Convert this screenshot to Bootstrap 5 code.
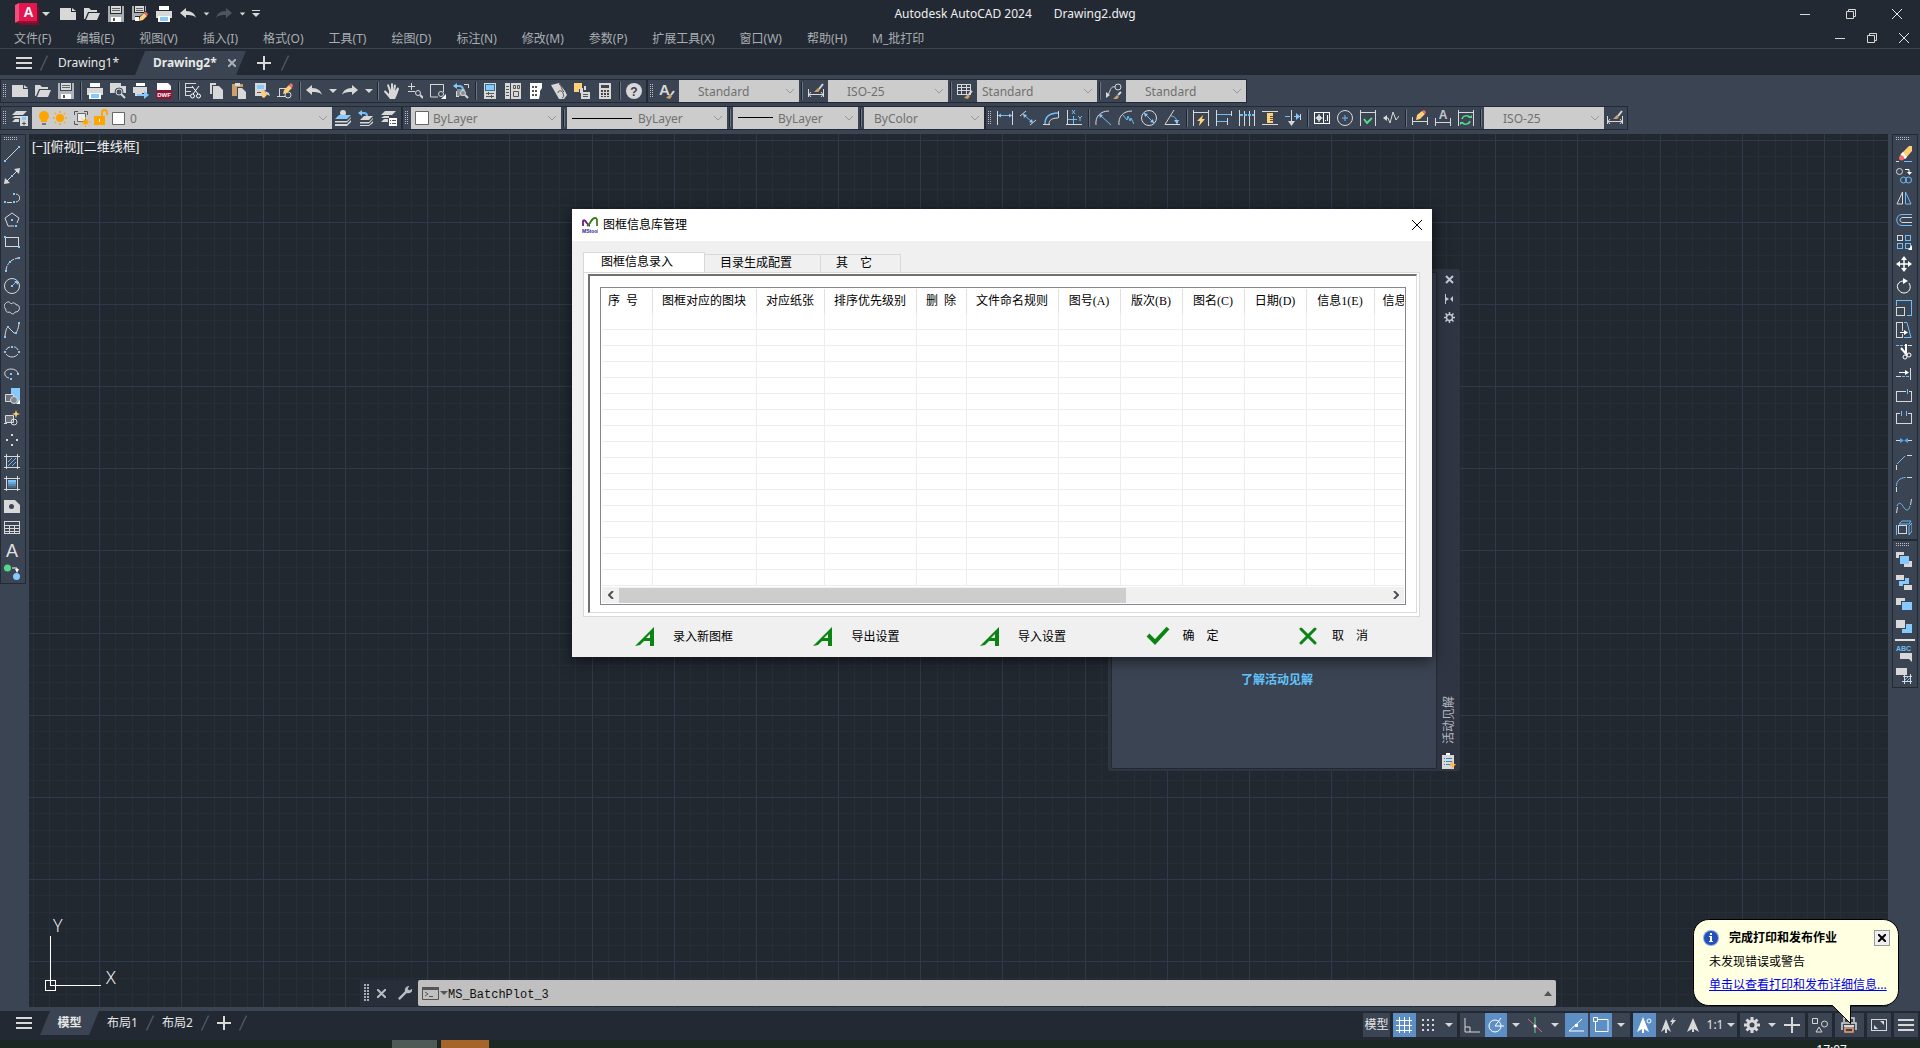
<!DOCTYPE html>
<html lang="zh-CN">
<head>
<meta charset="utf-8">
<meta name="viewport" content="width=device-width, initial-scale=1">
<title>Autodesk AutoCAD 2024 - Drawing2.dwg</title>
<link href="https://cdn.jsdelivr.net/npm/bootstrap@5.3.0/dist/css/bootstrap.min.css" rel="stylesheet">
<style>
:root{--dark:#222933;--bar:#3b4453;--line:#232a36;--lt:#d8d8d8;--bl:#6fbdf8;--ye:#ffcf76}
body{font:12px/16px "Noto Sans","Noto Sans CJK SC",sans-serif;background:var(--bar);color:#e6e6e6;overflow:hidden}
button,select,input{font:inherit}
svg{display:block;flex:none}
.ic{width:16px;height:16px}
/* icon paint */
.sl{stroke:var(--lt);fill:none}.sb{stroke:var(--bl);fill:none}.sw{stroke:#fff;fill:none}
.sd{stroke:var(--bar);fill:none}.sg{stroke:#56d88a;fill:none}.sy{stroke:#ffa500;fill:none}.sk{stroke:#555;fill:none}.sr{stroke:#e8637a;fill:none}
.fl{fill:var(--lt)}.fb{fill:#86c9ff}.fy{fill:var(--ye)}.fw{fill:#fff}.fd{fill:var(--bar)}.fo{fill:#ffa500}.fr{fill:#ff6a6a}.fg{fill:#56d88a}.fk{fill:#555}.fc{fill:#cba06a}
.crisp{shape-rendering:crispEdges}
.btn{--bs-btn-border-radius:0;--bs-btn-padding-x:0;--bs-btn-padding-y:0;--bs-btn-border-width:0;--bs-btn-font-size:12px;--bs-btn-color:#e6e6e6;--bs-btn-hover-color:#fff;--bs-btn-line-height:16px;display:flex;align-items:center;justify-content:center;flex:none}
.title-row,.menu-row,.file-tabs,.status-row{background:var(--dark)}
.title-row{height:28px;padding-left:15px}
.qa{width:24px;height:24px}
.caption{gap:22px;color:#eee;padding-left:110px}
.winbtn{width:46px;height:28px}
.menu-row{padding-left:14px;border-bottom:1px solid #39424f;height:21px}
.menu-row .nav{gap:25px}
.menu-row .nav-link{padding:2px 0 0;color:#a9adb2;line-height:18px}
.mdibtn{width:32px;height:20px}
.file-tabs{height:26px;padding:2px 0 0 16px}
.file-tabs .nav-link{padding:0;margin-left:2px;line-height:24px;color:#e8e8e8}
.newtab{margin:0 10px 0 11px}
.slash{width:8px;height:16px}
.hot{background:var(--bar);clip-path:polygon(10px 0,100% 0,calc(100% - 10px) 100%,0 100%)}
.hot-file{width:111px;height:24px;padding:0 10px 0 16px}
.toolbars{padding:4px 0;gap:3px}
.tbox{border:1px solid var(--line);height:24px;display:flex;align-items:center}
.grip{width:8px;height:14px;flex:none;background:repeating-linear-gradient(#b9bec6 0 1px,transparent 1px 2px) 2px 0/1px 14px no-repeat,repeating-linear-gradient(#b9bec6 0 1px,transparent 1px 2px) 4px 0/1px 14px no-repeat}
.tb{width:23px;height:22px;padding-right:1px}
.ar{width:13px;height:22px}
.sep{width:6px;height:18px;flex:none;display:flex}
.sep::before{content:"";width:2px;margin:0 auto;background:linear-gradient(90deg,#1f2631 50%,#6b7482 50%)}
.combo{position:relative;flex:none;height:22px}
.combo svg{position:absolute;left:0;top:0;pointer-events:none}
.combo .form-select,.combo .form-select:disabled{height:22px;padding:1px 20px 0 var(--in,19px);border:0;border-radius:0;font-size:12px;line-height:20px;color:#707070;background:#ccc url("data:image/svg+xml,%3Csvg xmlns='http://www.w3.org/2000/svg' width='10' height='6'%3E%3Cpath d='M1 1l4 4 4-4' fill='none' stroke='%23989898'/%3E%3C/svg%3E") no-repeat right 4px center/10px 6px;opacity:1}
.w120{width:120px}.w125{width:125px}.w150{width:150px}.w160{width:160px}.w300{width:300px}
.in5{--in:5px}.in10{--in:10px}.in22{--in:22px}.in45{--in:45px}.in71{--in:71px}.in98{--in:98px}
.side-left{width:29px}.side-right{width:32px;padding-left:4px}
.palette{width:26px;border:1px solid var(--line);padding-top:2px}
.hgrip{width:14px;height:3px;margin:0 auto 3px 3px;background:repeating-linear-gradient(90deg,#b9bec6 0 1px,transparent 1px 2px) 0 0/14px 1px no-repeat,repeating-linear-gradient(90deg,#b9bec6 0 1px,transparent 1px 2px) 0 2px/14px 1px no-repeat}
.pb{width:22px;height:22px}
.hrule{height:2px;background:#e2e2e2;margin:2px}
.drawing{background:#212830;overflow:hidden}
.gridlines{position:absolute;inset:0;width:100%;height:100%}
.viewlabel{position:relative;padding:3px 3px;font:13px/20px "Liberation Sans","Noto Sans CJK SC",sans-serif;color:#f2f2f2}
.viewlabel a{color:inherit;text-decoration:none}
.ucs{position:absolute;left:12px;bottom:10px}
.ucs text{font:300 18px "Open Sans",sans-serif;fill:#fff}
/* dialog */
.dlg{position:absolute;left:543px;top:75px;width:860px;background:#f0f0f0;color:#000;box-shadow:0 3px 14px rgba(0,0,0,.6);font-family:"Liberation Serif","Noto Sans CJK SC",sans-serif}
.dlg-head{height:32px;background:#fff;padding:0 10px 0 10px;gap:5px}
.dlg-body{padding:11px 12px 0 11px}
.dlg .nav-tabs{border:0;align-items:flex-end}
.dlg .nav-tabs .nav-link{border:1px solid #d9d9d9;border-bottom:0;border-left:0;border-radius:0;margin:0;padding:0 0 0 15px;height:18px;line-height:17px;color:#000;text-align:left;background:#f0f0f0}
.dlg .nav-tabs .nav-link.active{height:20px;background:#fff;border-left:1px solid #d9d9d9;padding:0 0 0 17px;line-height:19px}
.t1{width:122px}.t2{width:116px}.t3{width:80px}
.page{background:#fff;border:1px solid #d9d9d9;padding:1px 2px 3px 4px}
.sunk{border-top:2px solid #707070;border-left:2px solid #707070;border-right:1px solid #dcdcdc;border-bottom:1px solid #dcdcdc;padding:11px 10px 7px 10px}
.list{border:1px solid #828790;padding:1px}
.list-clip{overflow:hidden;height:298px}
.list-clip .table{table-layout:fixed;width:833px;margin:0;--bs-table-bg:#fff;--bs-table-color:#000}
.list-clip th{height:24px;padding:0;text-align:center;font-weight:400;border:0;border-right:1px solid #e0e0e0;white-space:nowrap;line-height:24px}
.list-clip th:first-child{text-align:left;padding-left:6px}
.list-clip td{height:16px;padding:0;border:0;border-right:1px solid #ededed;border-bottom:1px solid #ededed}
.sbar{height:16px;background:#f0f0f0}
.sbar .btn{width:17px;height:16px}
.sbar .track{padding-top:1px}
.sbar .thumb{width:66%;height:15px;background:#cdcdcd}
.acts{height:40px;padding:0 64px 0 63px}
.acts .btn{--bs-btn-color:#000;--bs-btn-hover-color:#000;gap:18px}
.acts .near{gap:12px;padding-bottom:3px}
.acts .near2{gap:15px;padding-bottom:3px}
/* activity palette */
.act{position:absolute;left:1079px;top:135px;width:352px;height:502px;background:#2f3542;border-radius:3px}
.act-main{background:var(--bar);border:1px solid #232932;margin:3px 0 2px 3px;border-radius:2px;padding:0 0 80px 6px}
.act-main a{color:#62c4fb;font-weight:700;text-decoration:none}
.act-side{width:23px;padding:1px 0 0 1px}
.act-side .btn{width:23px;height:19px}
.act-side .vert{writing-mode:vertical-rl;text-orientation:sideways;transform:rotate(180deg);color:#b4b9c1;line-height:16px;margin-bottom:9px}
/* command line */
.cmd{position:absolute;left:331px;right:332px;bottom:1px;height:26px;background:#292f3a}
.cmd-tools{padding:0 6px 0 4px}
.cmd-in{background:#c0c0c0;border-radius:2px;padding:0 4px}
.cmd-in input{background:transparent;border:0;padding:4px 0 0;color:#111;font:12px/22px "Liberation Mono",monospace;outline:0;min-width:0}
/* status */
.under{height:4px}
.status-row{height:29px;padding:0 2px 0 16px}
.hot-model{width:59px;height:24px;font-weight:700;color:#fff}
.lay a{color:#e6e6e6;text-decoration:none}
.cell{background:var(--bar);height:24px;margin-top:2px;display:flex}
.cell+.cell{margin-left:3px}
.cell+.joined{margin-left:0}
.cell .btn{height:24px}
.on{background:#5e8fc4}
.gapl{margin-left:2px}
.c12{width:12px}.c16{width:16px}.c18{width:18px}.c20{width:20px}.c22{width:22px}.c24{width:24px}.c27{width:27px}
.c23{width:23px;padding-right:1px}.c25{width:25px;padding-right:1px}.c29{width:29px;padding-right:1px}
.task{height:8px;background:#1a2723;overflow:hidden}
.task .g{width:45px;background:#4d5a55;margin-left:392px}
.task .o{width:48px;background:#a5652a;margin-left:4px}
.task .clock{margin:3px 73px 0 auto;line-height:14px;color:#fff}
.tip{position:absolute;right:21px;bottom:42px;width:206px;height:87px;color:#000}
.tip .balloon{position:absolute;left:0;top:0}
.tip-in{position:relative;padding:11px 9px 0 10px}
.tip-in strong{margin-left:10px}
.tip-in p{margin:8px 0 7px 6px}
.tip-in a{margin-left:6px;color:#0000f0}
.tip-x{width:16px;height:16px;background:#efefef;border:1px solid #9a9a9a}
</style>
<script src="https://cdn.jsdelivr.net/npm/bootstrap@5.3.0/dist/js/bootstrap.bundle.min.js"></script>
</head>
<body class="vh-100 d-flex flex-column position-relative">

<svg class="d-none" aria-hidden="true">
<symbol id="new" viewBox="0 0 16 16"><path class="fl" d="M0 2h11v4h5v8H0z"/><path class="fl" d="M12 2l4 3h-4z"/></symbol>
<symbol id="open" viewBox="0 0 16 16"><path class="fl" d="M0 2h5l2 2h6v2H4l-3 7H0z"/><path class="fl" d="M5 7h11l-3 7H2z"/></symbol>
<symbol id="save" viewBox="0 0 16 16"><path class="fl" d="M0 0h2v8h12V0h2v16H0z" opacity=".75"/><path class="fl" d="M3 0h10v7H3z"/><path stroke="#666" d="M4 2.500h8M4 4.500h8" /><path class="fw" d="M3 11h10v5H3z"/><path fill="#555" d="M5 12h2v3H5z"/></symbol>
<symbol id="saveas" viewBox="0 0 16 16"><path class="fl" d="M0 0h2v7h11V0h1v5l-6 5H3v4H0z" opacity=".75"/><path class="fl" d="M3 0h9v6H3z"/><path stroke="#666" d="M4 2.500h7M4 4.500h7"/><path class="fw" d="M3 11h4v4H3z"/><path class="fy" d="M7 15l1-4 4-4 3 3-4 4z"/><path class="fr" d="M12 7l2-1 2 2-1 2z"/></symbol>
<symbol id="print" viewBox="0 0 16 16"><path class="fw" d="M3 0h10v4H3z"/><path class="fl" d="M0 5h16v7h-2v-2H2v2H0z"/><path class="fw" d="M2 10h12v6H2z"/><path class="fb" d="M4 11h8v4H4z"/></symbol>
<symbol id="preview" viewBox="0 0 16 16"><path class="fl" d="M0 0h11v3h5v7H0z"/><circle cx="9" cy="9" r="4" fill="#444d5b" stroke="#444d5b"/><circle class="sl" cx="9" cy="9" r="3"/><path class="sl" stroke-width="2" d="M11 11l4 4"/></symbol>
<symbol id="publish" viewBox="0 0 16 16"><path class="fw" d="M3 0h9v3H3z"/><path class="fl" d="M0 4h14v6H9v3H2v-3H0z"/><path class="fb" d="M4 11h7V8l5 4-5 4v-3H4z"/></symbol>
<symbol id="dwf" viewBox="0 0 16 16"><path class="fw" d="M1 0h11l3 3v7H1z"/><path fill="#8d1533" d="M0 7h16v9H0z"/><text x="8" y="14" text-anchor="middle" font-size="6" font-weight="700" fill="#fff" font-family="Liberation Sans,sans-serif">DWF</text></symbol>
<symbol id="cut" viewBox="0 0 16 16"><path class="sl" d="M0 .5h11M0 4.500h8M0 8.500h6M0 12.500h5M.5 0v13"/><path class="sw" d="M7 3l6 8M14 3l-6 8"/><circle class="sw" cx="7.500" cy="13" r="2"/><circle class="sw" cx="13.500" cy="13" r="2"/></symbol>
<symbol id="copy" viewBox="0 0 16 16"><path class="fl" d="M2 0h6v2H4v9H2z"/><path class="fl" d="M5 3h6l4 4v9H5z"/></symbol>
<symbol id="paste" viewBox="0 0 16 16"><path class="fc" d="M1 1h11v3H6v9H1z"/><path class="fl" d="M4 0h5v3H4zM7 5h4l4 4v7H7z"/></symbol>
<symbol id="match" viewBox="0 0 16 16"><path class="fl" d="M1 0h11v7l-3 1-1 5H1z"/><path class="fb" d="M3 2h7v4H3z"/><path stroke="#555" d="M3 9.500h4"/><path class="fy" d="M7 8l3-1 3 5-3 3-2-1z"/><path class="fl" d="M11 8l4 2 1 3-4-2z"/></symbol>
<symbol id="blockedit" viewBox="0 0 16 16"><path class="sl" d="M9 5.500H2.500v8H8M0 13.500h3"/><circle class="sl" cx="11" cy="12" r="3"/><path class="fy" d="M6 11l1-4 5-5 3 3-5 5z"/><path class="fr" d="M12 2l2-2 2 2-1 3z"/></symbol>
<symbol id="undo" viewBox="0 0 16 16"><path class="fl" d="M0 7l6-5v3c6 0 9 3 10 7-2-3-6-3-10-3v3z"/></symbol>
<symbol id="redo" viewBox="0 0 16 16"><path class="fl" d="M16 7l-6-5v3C4 5 1 8 0 12c2-3 6-3 10-3v3z"/></symbol>
<symbol id="dn" viewBox="0 0 10 16"><path class="fl" d="M1 6h8L5 10z"/></symbol>
<symbol id="pan" viewBox="0 0 16 16"><path class="fl" d="M5 8L3 2c1-1 2-1 2 0l2 5V1c0-1 2-1 2 0v6l1-5c1-1 2 0 2 1l-1 5 2-3c1-1 2 0 2 1-1 3-2 6-4 10H6C4 13 2 11 0 9c0-1 1-2 2-1l3 3z"/></symbol>
<symbol id="zoomrt" viewBox="0 0 16 16"><path class="sl" d="M1 3.500h7M4.500 0v7M1 8.500h7"/><circle class="sl" cx="11" cy="10" r="2.500"/><path class="sl" stroke-width="2" d="M13 12l3 3"/></symbol>
<symbol id="zoomwin" viewBox="0 0 16 16"><path class="sl" d="M.5 1.500h13V9M.5 1v13H8"/><circle class="sl" cx="11" cy="11" r="2.500"/><path class="fw" d="M16 11v5h-5z"/></symbol>
<symbol id="zoomprev" viewBox="0 0 16 16"><path class="sb" stroke-width="2" d="M1 3h5c3 0 4 2 4 4"/><path class="fb" d="M0 3l4-3v6z"/><path class="sl" d="M11 1.500h4.500V5M3.500 8v5.500H6M3 13.500h3"/><path class="fl" opacity=".5" d="M4 6h8v7H4z"/><circle class="sl" cx="10" cy="10" r="2.500"/><path class="sl" stroke-width="2" d="M12 12l3 3"/></symbol>
<symbol id="props" viewBox="0 0 16 16"><path class="fl" d="M2 0h12v16H2z"/><path fill="#3b6f9c" d="M3 1h10v7H3z"/><path class="fb" d="M4 2h8v5H4z"/><path class="sk" d="M4 10.500h8M4 13.500h8M6.500 9v3M9.500 12v3"/></symbol>
<symbol id="dcenter" viewBox="0 0 16 16"><path class="fl" d="M0 0h5v16H0zM6 0h10v16H6z"/><path class="sk" d="M1 3.500h3M1 6.500h3M1 9.500h3M1 12.500h3M8.500 2.500h2v3h-2zM12.500 2.500h2v3h-2zM8.500 8.500h5v5h-5z"/></symbol>
<symbol id="toolpal" viewBox="0 0 16 16"><path class="fw" d="M2 0h12v5l-2 3v3l-1 5H2z"/><path fill="#555" d="M4 3h2v2H4zM7 3h2v2H7zM4 7h2v2H4zM7 7h2v2H7zM4 11h2v2H4zM7 11h2v2H7z"/></symbol>
<symbol id="sheet" viewBox="0 0 16 16"><path class="fl" d="M0 2l8-2 6 8 2 4-3 4H8z"/><path class="sk" d="M8 1c3 1 2 6 5 8M7 10c0-3 4-3 5 0s1 4-1 5"/></symbol>
<symbol id="markup" viewBox="0 0 16 16"><path class="fy" d="M0 0h8v6H5v3H0z"/><path class="fl" d="M6 5h3v5H6zM10 3h2v4h-2zM7 9h9v7H7z"/><path class="sk" d="M9 11.500h5M9 13.500h5"/></symbol>
<symbol id="calc" viewBox="0 0 16 16"><path class="fl" d="M2 0h12v16H2z"/><path fill="#444" d="M4 2h8v3H4zM4 7h2v2H4zM7 7h2v2H7zM10 7h2v2h-2zM4 10h2v2H4zM7 10h2v2H7zM10 10h2v2h-2zM4 13h2v1H4zM7 13h2v1H7zM10 13h2v1h-2z"/></symbol>
<symbol id="help" viewBox="0 0 16 16"><circle class="fl" cx="8" cy="8" r="8"/><text x="8" y="12.500" text-anchor="middle" font-size="12" font-weight="700" fill="#39414f" font-family="Liberation Sans,sans-serif">?</text></symbol>
<symbol id="tstyle" viewBox="0 0 16 16"><text x="5.500" y="12" text-anchor="middle" font-size="15" font-weight="700" fill="#d8d8d8" font-family="Liberation Sans,sans-serif">A</text><path class="sl" stroke-width="2" d="M15 8l-3 4"/><path class="fc" d="M7 15l4-4 2 2-2 3z"/></symbol>
<symbol id="dstyle" viewBox="0 0 16 16"><path class="sl" d="M.5 6v8M15.500 6v8M1 11.500h14M3 9l-2 2.500L3 14M13 9l2 2.500L13 14"/><path class="sl" stroke-width="2" d="M15 1l-4 5"/><path class="fc" d="M6 9l4-4 2 2-2 2z"/></symbol>
<symbol id="tbstyle" viewBox="0 0 16 16"><path class="sl crisp" d="M.5 1.500h13v10H.5zM0 4.500h14M0 7.500h14M4.500 2v10M9.500 2v10"/><path class="sl" stroke-width="2" d="M15 8l-3 3"/><path class="fc" d="M7 15l4-4 2 2-2 3z"/></symbol>
<symbol id="mlstyle" viewBox="0 0 16 16"><circle class="sl" cx="12" cy="4" r="3"/><path class="sl" d="M9 4C5 3 5 6 2 12"/><path class="fl" d="M0 15V9l4 3z"/><path class="sl" stroke-width="2" d="M15 9l-3 3"/><path class="fc" d="M7 16l4-4 2 2-2 2z"/></symbol>
<symbol id="layers" viewBox="0 0 16 16"><path class="fl" d="M4 1h11l-4 4H0zM3 6h6v2H0zM3 9h4v3H0z"/><path class="fl" d="M8 6h8v10H8z"/><path class="fb" d="M10 7h4v3h-4z"/><path class="sk" d="M10 13.500h4M12 11.500v4"/></symbol>
<symbol id="laycur" viewBox="0 0 16 16"><circle class="fl" cx="8" cy="3" r="3"/><path class="fb" d="M4 5h12l-4 4H0z"/><path class="fl" d="M0 11h12l4-4v1l-4 4.500H0zM0 14h12l4-4v2l-4 4H0z"/></symbol>
<symbol id="layprev" viewBox="0 0 16 16"><path class="sb" stroke-width="2" d="M2 3h4c3 0 3 2 3 3"/><path class="fb" d="M0 3l4-3v6z"/><path class="fl" d="M6 6h9l-4 4H2zM2 12h9l4-4v1l-4 4.500H2zM2 15h9l4-4v2l-4 3H2z"/></symbol>
<symbol id="laystate" viewBox="0 0 16 16"><path class="fl" d="M4 1h11l-4 4H0zM3 6h5v2H0zM3 9h4v3H0z"/><path class="fw" d="M8 8h8v8H8z"/><path class="sk" d="M9 10.500h1M11 10.500h4M9 13.500h1M11 13.500h4"/></symbol>
<!-- dimension tools -->
<symbol id="dlin" viewBox="0 0 16 16"><path class="sl crisp" d="M.5 1v14M15.500 1v14"/><path class="sb" d="M1 5.500h14"/><path class="fb" d="M1 5.500l3-2v4zM15 5.500l-3-2v4z"/></symbol>
<symbol id="dali" viewBox="0 0 16 16"><path class="sl" d="M0 6l6-5M10 15l6-5"/><path class="sb" d="M3 4l9 8"/><path class="fb" d="M3 4l4 1-3 3zM13 13l-4-1 3-3z"/></symbol>
<symbol id="darc" viewBox="0 0 16 16"><path class="sb" stroke-width="1.500" d="M2 14C2 7 6 3 15 3"/><path class="sl" d="M0 14.500h7M15.500 1v7M6 14c0-4 3-6 9-6"/></symbol>
<symbol id="dord" viewBox="0 0 16 16"><path class="sl crisp" d="M1.500 0v15M0 14.500h16"/><path class="sb" d="M2 9.500h9M7.500 6v8M6 0l3 4M9 0L6 4M12 6l2 2 2-2M14 8v3"/></symbol>
<symbol id="drad" viewBox="0 0 16 16"><path class="sl" d="M1 15C0 7 5 1 14 1"/><path class="sb" d="M5 5l11 10"/><path class="fb" d="M4 4l4 1-3 3z"/></symbol>
<symbol id="djog" viewBox="0 0 16 16"><path class="sl" d="M1 15C0 7 5 1 14 1"/><path class="sb" d="M5 5l4 5 1-4 2 5 1-3 3 6"/></symbol>
<symbol id="ddia" viewBox="0 0 16 16"><circle class="sl" cx="8" cy="8" r="7.500"/><path class="sb" d="M3 3l10 10"/><path class="fb" d="M3 3l4 1-3 3zM13 13l-4-1 3-3z"/></symbol>
<symbol id="dang" viewBox="0 0 16 16"><path class="sl" d="M10 0L1 14.500h15"/><path class="sb" d="M7 6c4 0 6 3 6 8"/><path class="fb" d="M10 10h5l-2 4z"/></symbol>
<symbol id="dquick" viewBox="0 0 16 16"><path class="sl crisp" d="M.5 0v16M15.500 0v16M1 2.500h14"/><path class="fy" d="M10 5l-6 6h3l-1 5 6-7H9z"/></symbol>
<symbol id="dbase" viewBox="0 0 16 16"><path class="sl crisp" d="M.5 0v16M15.500 1v5M11.500 8v7"/><path class="sb" d="M1 4.500h14M1 11.500h10"/></symbol>
<symbol id="dcont" viewBox="0 0 16 16"><path class="sl crisp" d="M.5 0v16M5.500 1v15M10.500 1v15M15.500 0v16"/><path class="sb" stroke-width="2" stroke-dasharray="3 1" d="M1 5h14"/></symbol>
<symbol id="dspace" viewBox="0 0 16 16"><path class="sl crisp" d="M0 1.500h16M0 14.500h16"/><path class="fy" d="M5 3h6v10H5z"/><path class="sk" d="M8 6.500h3M8 8.500h3M8 10.500h3"/></symbol>
<symbol id="dbreak" viewBox="0 0 16 16"><path class="sl" d="M6.500 0v12M15.500 4v6"/><path class="sb" d="M0 6.500h5M9 6.500h6"/><path class="fl" d="M3 11h7l-3.500 5z"/><path class="fb" d="M11 3v7l4-3.500z"/></symbol>
<symbol id="dtol" viewBox="0 0 16 16"><path class="sw crisp" d="M.5 2.500h15v11H.5zM9.500 2v12"/><circle class="sw" cx="5" cy="8" r="2"/><path class="sw" d="M5 4v8M1.500 8h7M13.500 5v6M11 10.500h1"/></symbol>
<symbol id="dcen" viewBox="0 0 16 16"><circle class="sl" cx="8" cy="8" r="7.500"/><path class="sb" d="M8 5v6M5 8h6"/></symbol>
<symbol id="dinsp" viewBox="0 0 16 16"><path class="sl crisp" d="M.5 0v16M15.500 0v16M1 2.500h14"/><path class="sg" stroke-width="2" d="M4 9l3 4 5-5"/></symbol>
<symbol id="djl" viewBox="0 0 16 16"><path class="sl" d="M1 8h4l2 5 3-11 3 8 3-4"/><path class="fl" d="M0 8l4-3v6z"/></symbol>
<symbol id="dedit" viewBox="0 0 16 16"><path class="sl crisp" d="M.5 7v8M15.500 7v8M1 11.500h14"/><path class="fy" d="M4 10l1-5 5-4 3 3-5 5z"/><path class="fr" d="M10 1l2-1 2 2-1 2z"/></symbol>
<symbol id="dtedit" viewBox="0 0 16 16"><path class="sl crisp" d="M.5 8v8M15.500 8v8M1 12.500h14"/><text x="8" y="9" text-anchor="middle" font-size="12" font-weight="700" fill="#c8c8c8" font-family="Liberation Sans,sans-serif">A</text></symbol>
<symbol id="dupd" viewBox="0 0 16 16"><path class="sl crisp" d="M.5 0v16M15.500 0v16M1 2.500h14"/><path class="sg" stroke-width="1.500" d="M4 9c1-4 7-4 8-1M12 11c-1 4-7 4-8 1"/><path class="fg" d="M10 8h4V5zM6 12H2v3z"/></symbol>
<!-- draw tools -->
<symbol id="line" viewBox="0 0 16 16"><path class="sl" d="M2 14L14 2"/><path class="fb" d="M0 14h2v2H0zM14 0h2v2h-2z"/></symbol>
<symbol id="xline" viewBox="0 0 16 16"><path class="sl" d="M3 13L13 3"/><path class="fl" d="M0 16l1-6 5 5zM16 0l-1 6-5-5z"/><path class="fb" d="M7 7h2v2H7z"/></symbol>
<symbol id="pline" viewBox="0 0 16 16"><path class="sl" d="M3 12.500h5M12 4c5 1 5 7 0 8"/><path class="fb" d="M0 11h2v2H0zM9 3h2v2H9zM9 11h2v2H9z"/></symbol>
<symbol id="polygon" viewBox="0 0 16 16"><path class="sl" d="M10 14H4L1 6l7-5 7 5-2 5"/><path class="fb" d="M7 7h2v2H7zM11 13h2v2h-2z"/></symbol>
<symbol id="rect" viewBox="0 0 16 16"><path class="sl crisp" d="M1.500 3.500h13v9h-13z"/><path class="fb" d="M0 2h2v2H0zM14 12h2v2h-2z"/></symbol>
<symbol id="arc" viewBox="0 0 16 16"><path class="sl" stroke-dasharray="4 1" d="M2 14C3 7 8 3 14 2"/><path class="fb" d="M1 14h2v2H1zM5 5h2v2H5zM14 1h2v2h-2z"/></symbol>
<symbol id="circle" viewBox="0 0 16 16"><circle class="sl" cx="8" cy="8" r="7.500"/><path class="sb" d="M9 7l3-3"/><path class="fb" d="M7 7h2v2H7zM10 3h4v4z"/></symbol>
<symbol id="cloud" viewBox="0 0 16 16"><path class="sl" d="M2 9c-3-1-2-5 0-6 2-2 4-1 5 1 2-2 5-1 5 1 3-1 4 3 3 5s-3 2-4 2c-1 3-4 2-5 0-3 1-5-1-4-3z"/></symbol>
<symbol id="spline" viewBox="0 0 16 16"><path class="sl" d="M1 14C2 7 3 4 5 6l5 5c3 1 4-4 5-9"/><path class="fb" d="M0 14h2v2H0zM3 4h2v2H3zM11 10h2v2h-2zM14 0h2v2h-2z"/></symbol>
<symbol id="ellipse" viewBox="0 0 16 16"><path class="sl" d="M2 6c1-2 3-3 4-3M10 3c2 0 3 1 4 3M2 10c3 4 9 4 12 0"/><path class="fb" d="M0 7h2v2H0zM14 7h2v2h-2zM7 2h2v2H7z"/></symbol>
<symbol id="earc" viewBox="0 0 16 16"><path class="sl" d="M5 12C-1 11-1 3 7 3c4 0 6 2 7 4"/><path class="fb" d="M6 7h2v2H6zM13 7h2v2h-2zM6 12h2v2H6z"/></symbol>
<symbol id="insblk" viewBox="0 0 16 16"><path class="fb" d="M7 0h9v14H7z"/><path fill="#68707c" stroke="#d8d8d8" d="M1.500 6.500h8v7h-8z"/><circle fill="#7c8793" stroke="#d8d8d8" cx="10" cy="12" r="3.500"/><path class="fw" d="M16 12v4h-4z"/></symbol>
<symbol id="mkblk" viewBox="0 0 16 16"><path fill="#68707c" stroke="#d8d8d8" d="M1.500 5.500h8v7h-8zM0 13.500h3"/><circle class="sl" cx="10" cy="12" r="3"/><path class="fy" d="M12 0l1 3 3 1-3 1-1 3-1-3-3-1 3-1z"/></symbol>
<symbol id="points" viewBox="0 0 16 16"><path class="fl" d="M7 2h2v2H7zM2 7h2v2H2zM12 7h2v2h-2zM7 12h2v2H7z"/></symbol>
<symbol id="hatch" viewBox="0 0 16 16"><path class="sl crisp" d="M2.500 0v15M13.500 0v15M0 2.500h16M0 13.500h16"/><path class="sb" d="M4 8l4-4M4 12l8-8M8 12l4-4"/></symbol>
<symbol id="grad" viewBox="0 0 16 16"><path class="sl crisp" d="M2.500 0v15M13.500 0v15M0 2.500h16M0 13.500h16"/><path fill="#79c3ff" d="M4 4h8v2H4z"/><path fill="#69a5d6" d="M4 6h8v2H4z"/><path fill="#5988ae" d="M4 8h8v2H4z"/><path fill="#4a6986" d="M4 10h8v2H4z"/></symbol>
<symbol id="region" viewBox="0 0 16 16"><path class="fl" d="M0 2h11l5 5v8H0z"/><circle class="fd" cx="7.500" cy="8.500" r="2.500"/></symbol>
<symbol id="tbl" viewBox="0 0 16 16"><path class="sl crisp" d="M.5 1.500h15v12H.5zM0 5.500h16M0 8.500h16M0 11.500h16M5.500 5v9M10.500 5v9"/></symbol>
<symbol id="mtext" viewBox="0 0 16 16"><text x="8" y="15" text-anchor="middle" font-size="18" fill="#e0e0e0" font-family="Liberation Sans,sans-serif">A</text></symbol>
<symbol id="addsel" viewBox="0 0 16 16"><circle class="fg" cx="3.500" cy="4" r="3.500"/><circle class="fb" cx="12.500" cy="12.500" r="3.500"/><path class="sw" d="M8 4h5v2"/><path class="fw" d="M11 5h4l-2 4z"/></symbol>
<!-- modify tools -->
<symbol id="erase" viewBox="0 0 16 16"><path class="fy" d="M16 0v5l-7 8-5-4 9-9z"/><path class="fw" d="M5 8l4 5 2-2-4-5z"/><circle class="fr" cx="5.500" cy="12" r="2.500"/><path class="sl" d="M0 15.500h3"/><path class="sb" d="M8 15.500h8"/></symbol>
<symbol id="mcopy" viewBox="0 0 16 16"><circle class="sl" cx="3.500" cy="3.500" r="3"/><path class="sw" d="M9 1.500h4V5"/><path class="fw" d="M11 4h5l-2.500 3z"/><circle class="sb" cx="7.500" cy="12" r="3"/><circle class="sb" cx="12.500" cy="12" r="3"/></symbol>
<symbol id="mirror" viewBox="0 0 16 16"><path class="sl" d="M6.500 2v12H1z"/><path class="sb" d="M9.500 2v12H15z"/></symbol>
<symbol id="offset" viewBox="0 0 16 16"><path class="sb" d="M16 2.500H6c-7 0-7 11 0 11h10"/><path class="sl" d="M16 5.500H7c-4 0-4 5 0 5h9"/></symbol>
<symbol id="array" viewBox="0 0 16 16"><path class="sl crisp" d="M1.500 1.500h5v5h-5z"/><path class="sb crisp" d="M9.500 1.500h5v5h-5zM1.500 9.500h5v5h-5zM9.500 9.500h5v5h-5z"/><path class="fw" d="M16 11v5h-4z"/></symbol>
<symbol id="move" viewBox="0 0 16 16"><path class="sw" stroke-width="1.500" d="M8 2v12M2 8h12"/><path class="fw" d="M8 0l3 4H5zM8 16l-3-4h6zM0 8l4-3v6zM16 8l-4 3V5z"/></symbol>
<symbol id="rotate" viewBox="0 0 16 16"><path class="sw" d="M13 5c3 5 0 10-5 10S0 9 2 6c1-2 3-3 6-3"/><path class="fw" d="M7 0l5 3-5 3z"/></symbol>
<symbol id="scale" viewBox="0 0 16 16"><path class="sb crisp" d="M.5 6V.5h15v15H11"/><path class="sl crisp" d="M.5 7.500h8v8h-8z"/></symbol>
<symbol id="stretch" viewBox="0 0 16 16"><path class="sl crisp" d="M6.500 9V.5h-6v15h6V12"/><path class="sb" d="M8 .5h3l4 15H8"/><path class="sw" d="M4 10.500h5"/><path class="fw" d="M8 8l4 2.500L8 13z"/></symbol>
<symbol id="trim" viewBox="0 0 16 16"><path class="sb" stroke-dasharray="3 1" d="M0 1.500h9"/><path class="sl" d="M12 1.500h4"/><path class="sw" stroke-width="2" d="M10 0v9M5 4l6 7"/><circle class="sw" cx="9" cy="13" r="2"/><circle class="sw" cx="13" cy="11" r="2"/></symbol>
<symbol id="extend" viewBox="0 0 16 16"><path class="sl crisp" d="M14.500 2v12M0 10.500h5"/><path class="sb" stroke-dasharray="3 1" d="M6 10.500h8"/><path class="sw" d="M3 6.500h7"/><path class="fw" d="M9 4l4 2.500L9 9z"/></symbol>
<symbol id="brkpt" viewBox="0 0 16 16"><path class="sl crisp" d="M10 3.500H.5v10h15v-10H13"/><path class="sb crisp" d="M11.500 1v5"/></symbol>
<symbol id="brk" viewBox="0 0 16 16"><path class="sl crisp" d="M4 3.500H.5v10h15v-10H12"/><path class="sb crisp" d="M5.500 1v5M10.500 1v5"/></symbol>
<symbol id="join" viewBox="0 0 16 16"><path class="sl" d="M0 8.500h4M12 8.500h4"/><path fill="#4ba8ee" d="M4 6l4 2.500L4 11zM12 6L8 8.500l4 2.500z"/></symbol>
<symbol id="chamfer" viewBox="0 0 16 16"><path class="sl" d="M.5 16v-5M11 1.500h5"/><path class="sb" d="M1 10l8-8"/></symbol>
<symbol id="fillet" viewBox="0 0 16 16"><path class="sl" d="M.5 16v-5M11 1.500h5"/><path class="sb" d="M.5 10c0-5 3-8 9-8.500"/></symbol>
<symbol id="blend" viewBox="0 0 16 16"><path class="sl" d="M.5 15l1-6M14.500 7l1-6"/><path class="sb" d="M1 8c3-7 6 1 8 3s4 1 5-3"/></symbol>
<symbol id="explode" viewBox="0 0 16 16"><path class="sb crisp" d="M.5 5v10"/><path class="sl crisp" d="M2.500 5.500h8v8h-8z"/><path class="sb" d="M3 4l3-3h9l-2 3zM13 6l3-3v8l-3 4z"/></symbol>
<symbol id="front" viewBox="0 0 16 16"><path class="fl" d="M0 0h8v3H3v3H0zM8 15v-3h5V9h3v6z"/><path class="fb" d="M4 4h9v8H4z"/></symbol>
<symbol id="back" viewBox="0 0 16 16"><path class="fb" d="M9 4h4v6H7v2H3V7h6z"/><path class="fl" d="M0 1h8v5H0zM8 11h8v5H8z"/></symbol>
<symbol id="above" viewBox="0 0 16 16"><path class="fl" d="M0 2h9v3H5v4H0z"/><path class="fb" d="M6 6h10v8H6z"/></symbol>
<symbol id="below" viewBox="0 0 16 16"><path class="fb" d="M10 6h6v9H6v-4h4z"/><path class="fl" d="M0 2h9v8H0z"/></symbol>
<symbol id="abc" viewBox="0 0 16 16"><text x="0" y="5" font-size="7" font-weight="700" fill="#6fbdf8" font-family="Liberation Sans,sans-serif">ABC</text><path class="fl" d="M4 7h12v9l-3-3H4z"/></symbol>
<symbol id="hback" viewBox="0 0 16 16"><path class="fl" d="M0 0h11v7H0z"/><path class="sl" d="M8.500 6v10M14.500 6v10M6 13.500h10M7 8.500h9"/><path class="sb" d="M9 12l4-4M11 13l3-3"/></symbol>
<symbol id="burger" viewBox="0 0 16 16"><path class="fl crisp" d="M0 2h16v2H0zM0 7h16v2H0zM0 12h16v2H0z"/></symbol>
<symbol id="plus" viewBox="0 0 14 14"><path class="fl crisp" d="M6 0h2v14H6zM0 6h14v2H0z"/></symbol>
<symbol id="sl" viewBox="0 0 8 16"><path stroke="#4b5462" d="M7.500.5l-7 15" stroke-width="1.500"/></symbol>
<symbol id="min" viewBox="0 0 10 10"><path class="sl crisp" d="M0 5.500h10"/></symbol>
<symbol id="res" viewBox="0 0 10 10"><path class="sl" d="M.5 2.500h7v7h-7zM2.500 2V.5h7v7H8"/></symbol>
<symbol id="x" viewBox="0 0 10 10"><path stroke="currentColor" d="M0 0l10 10M10 0L0 10"/></symbol>
<symbol id="green" viewBox="0 0 20 20"><path fill="#0a8412" fill-rule="evenodd" d="M0 19L19 0v19h-4v-5H9l-4 4zM15 7l-4 4h4z"/></symbol>
</svg>

<header>
  <div class="title-row d-flex align-items-center position-relative">
    <button class="btn" type="button" aria-label="应用程序菜单"><svg width="24" height="22" viewBox="0 0 24 22"><path fill="#74102a" d="M4 4h20v18H4z"/><path fill="#f0507c" d="M0 2l4-2v18l-4 2z"/><path fill="#e6154f" d="M4 0h18v18H4z"/><path fill="#8f1434" d="M0 20l4-2h18v2z"/><text x="13.500" y="14" text-anchor="middle" font-size="14" font-weight="700" fill="#fff" font-family="Liberation Sans,sans-serif">A</text></svg></button>
    <button class="btn ar" type="button" aria-label="展开"><svg width="10" height="16"><use href="#dn"/></svg></button>
    <div class="d-flex align-items-center ms-1" role="toolbar">
      <button class="btn qa" type="button" aria-label="新建"><svg class="ic"><use href="#new"/></svg></button>
      <button class="btn qa" type="button" aria-label="打开"><svg class="ic"><use href="#open"/></svg></button>
      <button class="btn qa" type="button" aria-label="保存"><svg class="ic"><use href="#save"/></svg></button>
      <button class="btn qa" type="button" aria-label="另存为"><svg class="ic"><use href="#saveas"/></svg></button>
      <button class="btn qa" type="button" aria-label="打印"><svg class="ic"><use href="#print"/></svg></button>
      <button class="btn qa" type="button" aria-label="放弃"><svg class="ic"><use href="#undo"/></svg></button>
      <button class="btn c12" type="button" aria-label="放弃列表"><svg width="7" height="12"><use href="#dn"/></svg></button>
      <button class="btn qa opacity-25" type="button" aria-label="重做"><svg class="ic"><use href="#redo"/></svg></button>
      <button class="btn c12" type="button" aria-label="重做列表"><svg width="7" height="12"><use href="#dn"/></svg></button>
      <button class="btn c16" type="button" aria-label="自定义"><svg width="8" height="8" viewBox="0 0 8 8"><path class="fl" d="M0 0h8v1H0zM0 3h8L4 7z"/></svg></button>
    </div>
    <div class="caption position-absolute start-0 end-0 d-flex justify-content-center pe-none"><span>Autodesk AutoCAD 2024</span><span>Drawing2.dwg</span></div>
    <div class="d-flex ms-auto">
      <button class="btn winbtn" type="button" aria-label="最小化"><svg width="10" height="10"><use href="#min"/></svg></button>
      <button class="btn winbtn" type="button" aria-label="还原"><svg width="10" height="10"><use href="#res"/></svg></button>
      <button class="btn winbtn" type="button" aria-label="关闭"><svg width="10" height="10"><use href="#x"/></svg></button>
    </div>
  </div>
  <div class="menu-row d-flex align-items-center">
    <nav class="nav">
      <a class="nav-link" href="#">文件(F)</a><a class="nav-link" href="#">编辑(E)</a><a class="nav-link" href="#">视图(V)</a><a class="nav-link" href="#">插入(I)</a><a class="nav-link" href="#">格式(O)</a><a class="nav-link" href="#">工具(T)</a><a class="nav-link" href="#">绘图(D)</a><a class="nav-link" href="#">标注(N)</a><a class="nav-link" href="#">修改(M)</a><a class="nav-link" href="#">参数(P)</a><a class="nav-link" href="#">扩展工具(X)</a><a class="nav-link" href="#">窗口(W)</a><a class="nav-link" href="#">帮助(H)</a><a class="nav-link" href="#">M_批打印</a>
    </nav>
    <div class="d-flex ms-auto">
      <button class="btn mdibtn" type="button" aria-label="最小化图形"><svg width="10" height="10"><use href="#min"/></svg></button>
      <button class="btn mdibtn" type="button" aria-label="还原图形"><svg width="10" height="10"><use href="#res"/></svg></button>
      <button class="btn mdibtn" type="button" aria-label="关闭图形"><svg width="10" height="10"><use href="#x"/></svg></button>
    </div>
  </div>
  <div class="file-tabs d-flex align-items-center">
    <button class="btn" type="button" aria-label="文件选项卡菜单"><svg class="ic"><use href="#burger"/></svg></button>
    <svg class="slash mx-2"><use href="#sl"/></svg>
    <a class="nav-link" href="#">Drawing1*</a>
    <div class="hot hot-file d-flex align-items-center justify-content-between ms-3">
      <a class="nav-link fw-bold" href="#">Drawing2*</a>
      <button class="btn" type="button" aria-label="关闭选项卡"><svg width="8" height="8" viewBox="0 0 8 8"><path stroke="#a9b0ba" stroke-width="2" d="M0 0l8 8M8 0L0 8"/></svg></button>
    </div>
    <button class="btn newtab" type="button" aria-label="新图形"><svg width="14" height="14"><use href="#plus"/></svg></button>
    <svg class="slash"><use href="#sl"/></svg>
  </div>
</header>

<div class="toolbars d-flex flex-column">
  <div class="d-flex">
    <div class="tbox" role="toolbar" id="tb-standard"><span class="grip"></span></div>
    <div class="tbox" role="toolbar">
      <span class="grip"></span>
      <button class="btn tb" type="button" aria-label="文字样式"><svg class="ic"><use href="#tstyle"/></svg></button>
      <div class="combo w120"><select class="form-select" disabled aria-label="文字样式"><option>Standard</option></select></div>
      <span class="sep"></span>
      <button class="btn tb" type="button" aria-label="标注样式"><svg class="ic"><use href="#dstyle"/></svg></button>
      <div class="combo w120"><select class="form-select" disabled aria-label="标注样式"><option>ISO-25</option></select></div>
      <span class="sep"></span>
      <button class="btn tb" type="button" aria-label="表格样式"><svg class="ic"><use href="#tbstyle"/></svg></button>
      <div class="combo w120 in5"><select class="form-select" disabled aria-label="表格样式"><option>Standard</option></select></div>
      <span class="sep"></span>
      <button class="btn tb" type="button" aria-label="多重引线样式"><svg class="ic"><use href="#mlstyle"/></svg></button>
      <div class="combo w120"><select class="form-select" disabled aria-label="多重引线样式"><option>Standard</option></select></div>
    </div>
  </div>
  <div class="d-flex">
    <div class="tbox" role="toolbar">
      <span class="grip"></span>
      <button class="btn tb" type="button" aria-label="图层特性"><svg class="ic"><use href="#layers"/></svg></button>
      <div class="combo w300 in98"><select class="form-select" disabled aria-label="图层"><option>0</option></select>
        <svg width="96" height="22" viewBox="0 0 96 22"><circle class="fo" cx="12" cy="9" r="5"/><path class="fo" d="M9 11h6v4H9z"/><path fill="#777" d="M10 16h4v2h-4z"/><circle class="fo" cx="28" cy="11" r="4"/><path class="sy" stroke-width="1.500" d="M28 4v2M28 16v2M21 11h2M33 11h2M23 6l1 1M32 15l1 1M33 6l-1 1M24 15l-1 1"/><path class="sk" d="M42.500 8V4.500H46M52 4.500h3.500V8M42.500 14v3.500H46"/><path fill="#eee" stroke="#666" d="M45.500 6.500h8v8h-8z"/><circle class="fo" cx="53.500" cy="15" r="2.500"/><path class="sy" d="M53.500 10v2M53.500 18v2M48.500 15h2M56.500 15h2M50 11.500l1 1M57 11.500l-1 1M50 18.500l1-1M57 18.500l-1-1"/><path class="fo" d="M62 9h11v9H62z"/><path fill="#fff" d="M67 12h1v3h-1z"/><path class="sy" stroke-width="2" d="M70 9V6c0-4 5-4 5 0v2"/><path fill="#fff" stroke="#666" d="M80.500 5.500h12v12h-12z"/></svg></div>
      <button class="btn tb" type="button" aria-label="置为当前"><svg class="ic"><use href="#laycur"/></svg></button>
      <button class="btn tb" type="button" aria-label="上一个图层"><svg class="ic"><use href="#layprev"/></svg></button>
      <button class="btn tb" type="button" aria-label="图层状态"><svg class="ic"><use href="#laystate"/></svg></button>
    </div>
    <div class="tbox" role="toolbar">
      <span class="grip"></span>
      <div class="combo w150 in22"><select class="form-select" disabled aria-label="颜色"><option>ByLayer</option></select><svg width="20" height="22"><path fill="#fff" stroke="#666" d="M4.500 4.500h13v13h-13z"/></svg></div>
      <span class="sep"></span>
      <div class="combo w160 in71"><select class="form-select" disabled aria-label="线型"><option>ByLayer</option></select><svg width="70" height="22"><path stroke="#000" class="crisp" d="M5 11.500h60"/></svg></div>
      <span class="sep"></span>
      <div class="combo w125 in45"><select class="form-select" disabled aria-label="线宽"><option>ByLayer</option></select><svg width="44" height="22"><path stroke="#000" class="crisp" d="M5 10.500h35"/></svg></div>
      <span class="sep"></span>
      <div class="combo w120 in10"><select class="form-select" disabled aria-label="打印样式"><option>ByColor</option></select></div>
    </div>
    <div class="tbox" role="toolbar">
      <span class="grip"></span>
      <div class="d-flex align-items-center" id="tb-dim"></div>
      <div class="combo w120"><select class="form-select" disabled aria-label="当前标注样式"><option>ISO-25</option></select></div>
      <button class="btn tb" type="button" aria-label="标注样式管理"><svg class="ic"><use href="#dstyle"/></svg></button>
    </div>
  </div>
</div>

<main class="d-flex flex-grow-1 overflow-hidden">
  <aside class="side-left flex-shrink-0"><div class="palette" role="toolbar" id="tb-draw"><div class="hgrip"></div></div></aside>

  <section class="drawing flex-grow-1 position-relative">
    <svg class="gridlines" id="grid" aria-hidden="true"><path id="minor" stroke="#272e3a" class="crisp"/><path id="major" stroke="#31384a" class="crisp"/></svg>
    <div class="viewlabel d-inline-flex"><a href="#">[−]</a><a href="#">[俯视]</a><a href="#">[二维线框]</a></div>
    <svg class="ucs" width="80" height="84" viewBox="0 -6 80 84"><path class="sw crisp" d="M9.500 17v49.500H60M4.500 61.500h10v10h-10z"/><text x="12" y="13">Y</text><text x="65" y="65">X</text></svg>

    <aside class="act d-flex">
      <div class="act-main flex-grow-1 d-flex align-items-end justify-content-center"><a href="#">了解活动见解</a></div>
      <div class="act-side d-flex flex-column align-items-center">
        <button class="btn" type="button" aria-label="关闭"><svg width="9" height="9" viewBox="0 0 9 9"><path stroke="#c4c8ce" stroke-width="2" d="M1 1l7 7M8 1L1 8"/></svg></button>
        <button class="btn" type="button" aria-label="自动隐藏"><svg width="9" height="10" viewBox="0 0 9 10"><path fill="#c4c8ce" d="M0 0h1v10H0zM1 3l3 2-3 2zM8 2v6L5 5z"/></svg></button>
        <button class="btn" type="button" aria-label="特性"><svg width="11" height="11" viewBox="0 0 11 11"><circle cx="5.500" cy="5.500" r="3" fill="none" stroke="#c4c8ce" stroke-width="1.500"/><path stroke="#c4c8ce" stroke-width="1.500" d="M5.500 0v2M5.500 9v2M0 5.500h2M9 5.500h2M1.500 1.500L3 3M8 8l1.500 1.500M9.500 1.500L8 3M3 8L1.500 9.500"/></svg></button>
        <span class="vert mt-auto">活动见解</span>
        <svg width="16" height="18" viewBox="0 0 16 18"><path class="fw" d="M5 0h4v3H5z"/><path class="fl" d="M1 2h12v14H1z"/><path stroke="#2f86cf" d="M3 5.500h1M5 5.500h6M3 8.500h1M5 8.500h6M3 11.500h1M5 11.500h4"/><path fill="#ffb648" d="M12 7l-4 6h3l-1 4 5-6h-3z"/></svg>
      </div>
    </aside>

    <div class="dlg" role="dialog" aria-label="图框信息库管理">
      <div class="dlg-head d-flex align-items-center">
        <svg width="16" height="16" viewBox="0 0 16 16"><path fill="none" stroke="#6b1c84" stroke-width="1.800" d="M1 9V4c2-3 4 4 7 5"/><path fill="none" stroke="#3c7a1e" stroke-width="1.800" d="M5 9c4-2 4-8 8-8 2 0 2 1 2 3v5"/><text x="0" y="15.500" font-size="5" font-weight="700" fill="#23239a" font-family="Liberation Sans,sans-serif">MStool</text></svg>
        <span>图框信息库管理</span>
        <button class="btn ms-auto text-black" type="button" aria-label="关闭"><svg width="10" height="10"><use href="#x"/></svg></button>
      </div>
      <div class="dlg-body">
        <ul class="nav nav-tabs" role="tablist">
          <li class="nav-item"><button class="nav-link active t1" type="button" role="tab">图框信息录入</button></li>
          <li class="nav-item"><button class="nav-link t2" type="button" role="tab">目录生成配置</button></li>
          <li class="nav-item"><button class="nav-link t3" type="button" role="tab">其&emsp;它</button></li>
        </ul>
        <div class="page"><div class="sunk"><div class="list">
          <div class="list-clip">
            <table class="table"><colgroup><col style="width:50px"><col style="width:104px"><col style="width:68px"><col style="width:92px"><col style="width:50px"><col style="width:92px"><col style="width:62px"><col style="width:62px"><col style="width:62px"><col style="width:62px"><col style="width:68px"><col></colgroup>
              <thead><tr><th>序&ensp;号</th><th>图框对应的图块</th><th>对应纸张</th><th>排序优先级别</th><th>删&ensp;除</th><th>文件命名规则</th><th>图号(A)</th><th>版次(B)</th><th>图名(C)</th><th>日期(D)</th><th>信息1(E)</th><th class="text-start ps-2">信息</th></tr></thead>
              <tbody id="rows"></tbody>
            </table>
          </div>
          <div class="sbar d-flex">
            <button class="btn" type="button" aria-label="向左"><svg width="6" height="8" viewBox="0 0 6 8"><path fill="none" stroke="#505050" stroke-width="2" d="M5 0L1 4l4 4"/></svg></button>
            <div class="track flex-grow-1"><div class="thumb"></div></div>
            <button class="btn" type="button" aria-label="向右"><svg width="6" height="8" viewBox="0 0 6 8"><path fill="none" stroke="#505050" stroke-width="2" d="M1 0l4 4-4 4"/></svg></button>
          </div>
        </div></div></div>
      </div>
      <div class="acts d-flex align-items-center justify-content-between">
        <button class="btn" type="button"><svg width="20" height="20"><use href="#green"/></svg>录入新图框</button>
        <button class="btn" type="button"><svg width="20" height="20"><use href="#green"/></svg>导出设置</button>
        <button class="btn" type="button"><svg width="20" height="20"><use href="#green"/></svg>导入设置</button>
        <button class="btn near" type="button"><svg width="24" height="19" viewBox="0 0 24 19"><path fill="none" stroke="#0a8412" stroke-width="4" d="M2 9l7 7L22 2"/></svg>确&emsp;定</button>
        <button class="btn near2" type="button"><svg width="18" height="18" viewBox="0 0 18 18"><path fill="none" stroke="#0a8412" stroke-width="3" stroke-linecap="round" d="M2 2l14 14M16 2L2 16"/></svg>取&emsp;消</button>
      </div>
    </div>

    <div class="cmd d-flex">
      <div class="cmd-tools d-flex align-items-center justify-content-between flex-shrink-0">
        <svg width="5" height="18" viewBox="0 0 5 18"><path stroke="#a9aeb6" stroke-width="2" stroke-dasharray="2 1" d="M1 0v18M4 0v18"/></svg>
        <button class="btn ms-2" type="button" aria-label="关闭命令行"><svg width="9" height="9" viewBox="0 0 9 9"><path stroke="#b9bdc3" stroke-width="2" d="M0 0l9 9M9 0L0 9"/></svg></button>
        <button class="btn ms-2 ps-1" type="button" aria-label="自定义"><svg width="14" height="16" viewBox="0 0 16 16"><path fill="#b9bdc3" d="M0 14l8-8c-1-4 2-6 5-6l-2 3 2 2 3-2c1 4-2 6-6 5l-8 8z"/></svg></button>
      </div>
      <div class="cmd-in flex-grow-1 d-flex align-items-center">
        <svg width="17" height="13" viewBox="0 0 17 13"><path class="sk" d="M.5.5h16v12H.5zM3 5l3 2-3 2M7 9.500h4"/><path class="fk" d="M0 0h17v3H0z"/></svg>
        <svg width="9" height="13" viewBox="0 0 9 13"><path class="fk" d="M1 4h8L5 8z"/></svg>
        <input class="flex-grow-1" value="MS_BatchPlot_3" aria-label="命令行">
        <svg width="8" height="5" viewBox="0 0 8 5"><path class="fk" d="M0 5h8L4 0z"/></svg>
      </div>
    </div>
  </section>

  <aside class="side-right flex-shrink-0">
    <div class="palette" role="toolbar" id="tb-mod"><div class="hgrip"></div></div>
    <div class="palette" role="toolbar" id="tb-order"><div class="hgrip"></div></div>
  </aside>
</main>

<div class="under flex-shrink-0"></div>
<footer class="flex-shrink-0">
  <div class="status-row d-flex align-items-start">
    <div class="lay d-flex align-items-center">
      <button class="btn" type="button" aria-label="布局菜单"><svg class="ic"><use href="#burger"/></svg></button>
      <a class="hot hot-model d-flex align-items-center justify-content-center mx-2" href="#">模型</a>
      <a href="#">布局1</a><svg class="slash mx-2"><use href="#sl"/></svg>
      <a href="#">布局2</a><svg class="slash mx-2"><use href="#sl"/></svg>
      <button class="btn" type="button" aria-label="新布局"><svg width="14" height="14"><use href="#plus"/></svg></button>
      <svg class="slash ms-2"><use href="#sl"/></svg>
    </div>
    <div class="d-flex ms-auto">
      <div class="cell"><button class="btn c27" type="button">模型</button></div>
      <div class="cell"><button class="btn c23 on" type="button" aria-label="栅格"><svg class="ic" viewBox="0 0 16 16"><path class="sw crisp" d="M3.500 0v16M8.500 0v16M13.500 0v16M0 3.500h16M0 8.500h16M0 13.500h16"/></svg></button><button class="btn c25" type="button" aria-label="捕捉"><svg class="ic" viewBox="0 0 16 16"><path class="sl crisp" stroke-width="2" stroke-dasharray="2 3" d="M2 3h14M2 8h14M2 13h14"/></svg></button><button class="btn c16" type="button" aria-label="捕捉选项"><svg width="10" height="16"><use href="#dn"/></svg></button></div>
      <div class="cell"><button class="btn c25" type="button" aria-label="正交"><svg class="ic" viewBox="0 0 16 16"><path class="sl" d="M1 1v14h15M1 10h5v5"/></svg></button><button class="btn c22 on" type="button" aria-label="极轴"><svg class="ic" viewBox="0 0 16 16"><circle class="sw" cx="7" cy="9" r="6"/><path class="sw" d="M7 9h9M7 9l6-8"/></svg></button><button class="btn c18" type="button" aria-label="极轴选项"><svg width="10" height="16"><use href="#dn"/></svg></button><button class="btn c20" type="button" aria-label="等轴测"><svg class="ic" viewBox="0 0 16 16"><path class="sr" d="M1 2l14 13"/><path class="sg" d="M8 0v16"/><circle cx="8" cy="9" r="1.500" fill="#fff"/></svg></button><button class="btn c20" type="button" aria-label="等轴测选项"><svg width="10" height="16"><use href="#dn"/></svg></button><button class="btn c23 on" type="button" aria-label="对象追踪"><svg class="ic" viewBox="0 0 16 16"><path class="sw" d="M14 2L1 14h15"/><path class="fw" d="M7 7h3v3H7z"/></svg></button><button class="btn c22 on gapl" type="button" aria-label="对象捕捉"><svg class="ic" viewBox="0 0 16 16"><path class="sw" d="M3 2.500h12v12H2.500V5"/><path fill="#5e8fc4" stroke="#fff" d="M.5.500h4v4h-4z"/></svg></button><button class="btn c18" type="button" aria-label="捕捉设置"><svg width="10" height="16"><use href="#dn"/></svg></button></div>
      <div class="cell"><button class="btn c23 on" type="button" aria-label="注释可见性"><svg class="ic" viewBox="0 0 16 16"><path class="fw" d="M7 0l6 15-5-3v4H6v-4l-5 3z"/><circle class="sw" cx="13" cy="4" r="2"/></svg></button><button class="btn c25" type="button" aria-label="自动缩放"><svg class="ic" viewBox="0 0 16 16"><path class="fl" d="M6 2l5 13-4-3v4H5v-4l-4 3zM14 0l-4 5h2l-1 4 5-6h-3z"/></svg></button><button class="btn c24" type="button" aria-label="注释比例"><svg class="ic" viewBox="0 0 16 16"><path class="fl" d="M8 1l6 14-5-3v3H7v-3l-5 3z"/></svg></button><button class="btn c20" type="button">1:1</button><button class="btn c12" type="button" aria-label="比例列表"><svg width="10" height="16"><use href="#dn"/></svg></button></div>
      <div class="cell"><button class="btn c24" type="button" aria-label="切换工作空间"><svg class="ic" viewBox="0 0 16 16"><circle cx="8" cy="8" r="4" fill="none" stroke="#d8d8d8" stroke-width="3"/><path stroke="#d8d8d8" stroke-width="3" d="M8 0v3M8 13v3M0 8h3M13 8h3M2.500 2.500l2 2M11.500 11.500l2 2M13.500 2.500l-2 2M4.500 11.500l-2 2"/></svg></button><button class="btn c16" type="button" aria-label="工作空间列表"><svg width="10" height="16"><use href="#dn"/></svg></button></div>
      <div class="cell joined"><button class="btn c25" type="button" aria-label="注释监视器"><svg class="ic" viewBox="0 0 16 16"><path class="fl crisp" d="M7 0h2v16H7zM0 7h16v2H0z"/></svg></button></div>
      <div class="cell"><button class="btn c24" type="button" aria-label="隔离对象"><svg class="ic" viewBox="0 0 16 16"><path class="sl" d="M.5 1.500h5v5h-5zM7 10l3 5H4z"/><circle class="sl" cx="12.500" cy="7" r="3"/></svg></button></div>
      <div class="cell"><button class="btn c29" type="button" aria-label="打印作业"><svg class="ic" viewBox="0 0 16 16"><path class="sl" stroke-width="1.500" d="M3 5V1h10v4M1 13V6h14v7"/><path class="fl" d="M3 8h10v2H3z"/><path fill="#3b4453" stroke="#f0a070" stroke-width="1.500" d="M4 11h8v4H4z"/></svg></button></div>
      <div class="cell"><button class="btn c24" type="button" aria-label="全屏显示"><svg class="ic" viewBox="0 0 16 16"><path class="sl crisp" d="M.5 2.500h15v11H.5z"/><path class="fl" d="M13 4v4L9 4zM3 12V8l4 4z"/></svg></button></div>
      <div class="cell"><button class="btn c24" type="button" aria-label="自定义"><svg class="ic"><use href="#burger"/></svg></button></div>
    </div>
  </div>
  <div class="task d-flex"><span class="g"></span><span class="o"></span><span class="clock">17:07</span></div>
</footer>

<div class="tip" role="alert">
  <svg class="balloon" width="206" height="106" viewBox="0 0 206 106"><path fill="#ffffe1" stroke="#000" d="M15.500.5h175c8 0 15 7 15 15v56c0 8-7 15-15 15H157.500v18l-18-18H15.500c-8 0-15-7-15-15v-56c0-8 7-15 15-15z"/></svg>
  <div class="tip-in">
    <div class="d-flex align-items-center">
      <svg width="16" height="16" viewBox="0 0 16 16"><circle cx="8" cy="8" r="8" fill="#8fa9dd"/><circle cx="8" cy="8" r="7" fill="#2450b8"/><path fill="#fff" d="M7 3h2v2H7zM6 6h3v5h1v1H6v-1h1V7H6z"/></svg>
      <strong>完成打印和发布作业</strong>
      <button class="btn tip-x ms-auto text-black" type="button" aria-label="关闭"><svg width="8" height="8" viewBox="0 0 8 8"><path stroke="#000" stroke-width="2" d="M0 0l8 8M8 0L0 8"/></svg></button>
    </div>
    <p>未发现错误或警告</p>
    <a href="#">单击以查看打印和发布详细信息...</a>
  </div>
</div>

<script>
// toolbars are lists of icon ids with labels; "|" is a separator and "v" a drop-down arrow
function fill(id, cls, items) {
  const host = document.getElementById(id);
  for (const it of items) {
    const [icon, label] = it.split(':');
    if (icon === '|') host.insertAdjacentHTML('beforeend', '<span class="' + (cls === 'pb' ? 'hrule d-block' : 'sep') + '"></span>');
    else if (icon === 'v') host.insertAdjacentHTML('beforeend', '<button class="btn ar" type="button" aria-label="列表"><svg width="10" height="16"><use href="#dn"/></svg></button>');
    else host.insertAdjacentHTML('beforeend', '<button class="btn ' + cls + '" type="button" aria-label="' + label + '"><svg class="ic"><use href="#' + icon + '"/></svg></button>');
  }
}
fill('tb-standard', 'tb', ['new:新建','open:打开','save:保存','|','print:打印','preview:打印预览','publish:发布','dwf:DWF','|','cut:剪切','copy:复制','paste:粘贴','match:特性匹配','blockedit:块编辑器','|','undo:放弃','v','redo:重做','v','|','pan:平移','zoomrt:实时缩放','zoomwin:窗口缩放','zoomprev:缩放上一个','|','props:特性','dcenter:设计中心','toolpal:工具选项板','sheet:图纸集','markup:标记集','calc:计算器','|','help:帮助']);
fill('tb-dim', 'tb', ['dlin:线性','dali:对齐','darc:弧长','dord:坐标','|','drad:半径','djog:折弯','ddia:直径','dang:角度','|','dquick:快速标注','dbase:基线','dcont:连续','dspace:标注间距','dbreak:折断','|','dtol:公差','dcen:圆心标记','dinsp:检验','djl:折弯线性','|','dedit:编辑标注','dtedit:编辑标注文字','dupd:标注更新','|']);
fill('tb-draw', 'pb', ['line:直线','xline:构造线','pline:多段线','polygon:多边形','rect:矩形','arc:圆弧','circle:圆','cloud:修订云线','spline:样条曲线','ellipse:椭圆','earc:椭圆弧','insblk:插入块','mkblk:创建块','points:点','hatch:图案填充','grad:渐变色','region:面域','tbl:表格','mtext:多行文字','addsel:添加选定对象']);
fill('tb-mod', 'pb', ['erase:删除','mcopy:复制','mirror:镜像','offset:偏移','array:阵列','move:移动','rotate:旋转','scale:缩放','stretch:拉伸','trim:修剪','extend:延伸','brkpt:打断于点','brk:打断','join:合并','chamfer:倒角','fillet:圆角','blend:光顺曲线','explode:分解']);
fill('tb-order', 'pb', ['front:前置','back:后置','above:置于对象之上','below:置于对象之下','|','abc:注释前置','hback:图案填充后置']);

// empty list rows
document.getElementById('rows').innerHTML = ('<tr>' + '<td></td>'.repeat(12) + '</tr>').repeat(17);

// drawing grid: a major line every five minor steps
function drawGrid() {
  const g = document.getElementById('grid'), w = g.clientWidth, h = g.clientHeight, step = 16.43;
  let a = '', b = '';
  for (let i = -4; 70 + i * step < w; i++) { const x = Math.floor(70.2 + i * step) + .5, s = `M${x} 0V${h}`; i % 5 ? a += s : b += s; }
  for (let i = 0; 6 + i * step < h; i++) { const y = Math.floor(6.2 + i * step) + .5, s = `M0 ${y}H${w}`; i % 5 ? a += s : b += s; }
  document.getElementById('minor').setAttribute('d', a);
  document.getElementById('major').setAttribute('d', b);
}
drawGrid();
addEventListener('resize', drawGrid);
</script>
</body>
</html>
